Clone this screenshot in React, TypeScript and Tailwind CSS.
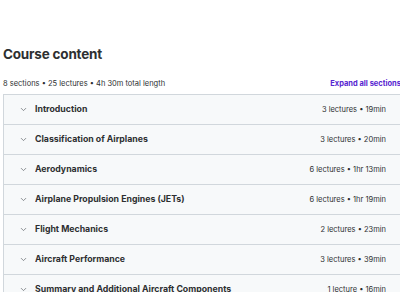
import React from 'react';
import { ChevronDown } from 'lucide-react';

interface Section {
  title: string;
  meta: string;
}

const sections: Section[] = [
  { title: 'Introduction', meta: '3 lectures • 19min' },
  { title: 'Classification of Airplanes', meta: '3 lectures • 20min' },
  { title: 'Aerodynamics', meta: '6 lectures • 1hr 13min' },
  { title: 'Airplane Propulsion Engines (JETs)', meta: '6 lectures • 1hr 19min' },
  { title: 'Flight Mechanics', meta: '2 lectures • 23min' },
  { title: 'Aircraft Performance', meta: '3 lectures • 39min' },
  { title: 'Summary and Additional Aircraft Components', meta: '1 lecture • 16min' },
];

export default function App() {
  return (
    <div
      className="w-[400px] h-[292px] overflow-hidden bg-white text-[#2d2f31]"
      style={{ fontFamily: 'Inter, "Noto Sans", sans-serif' }}
    >
      <div className="w-[401px] pl-[3px] pt-[44px]">
        <h2 className="text-[13.5px] leading-[20px] font-bold tracking-[-0.2px]">Course content</h2>

        <div className="flex items-center justify-between mt-[14px] h-[12px]">
          <span className="text-[7.5px] text-[#2d2f31]">
            8 sections • 25 lectures • 4h 30m total length
          </span>
          <span className="text-[7.5px] font-bold text-[#5624d0]">Expand all sections</span>
        </div>

        {/* Sections list */}
        <div className="mt-[4px] border-t border-l border-[#d1d7dc]">
          {sections.map((s) => (
            <div
              key={s.title}
              className="h-[30px] flex items-center bg-[#f7f9fa] border-b border-[#d1d7dc] pl-[15px] pr-[15px]"
            >
              <ChevronDown size={9} strokeWidth={2} className="text-[#6a6f73] mr-[7px] shrink-0" />
              <span className="flex-1 text-[8.75px] font-bold text-[#2d2f31] truncate">{s.title}</span>
              <span className="text-[7.5px] text-[#2d2f31] ml-2 whitespace-nowrap">{s.meta}</span>
            </div>
          ))}
        </div>
      </div>
    </div>
  );
}
